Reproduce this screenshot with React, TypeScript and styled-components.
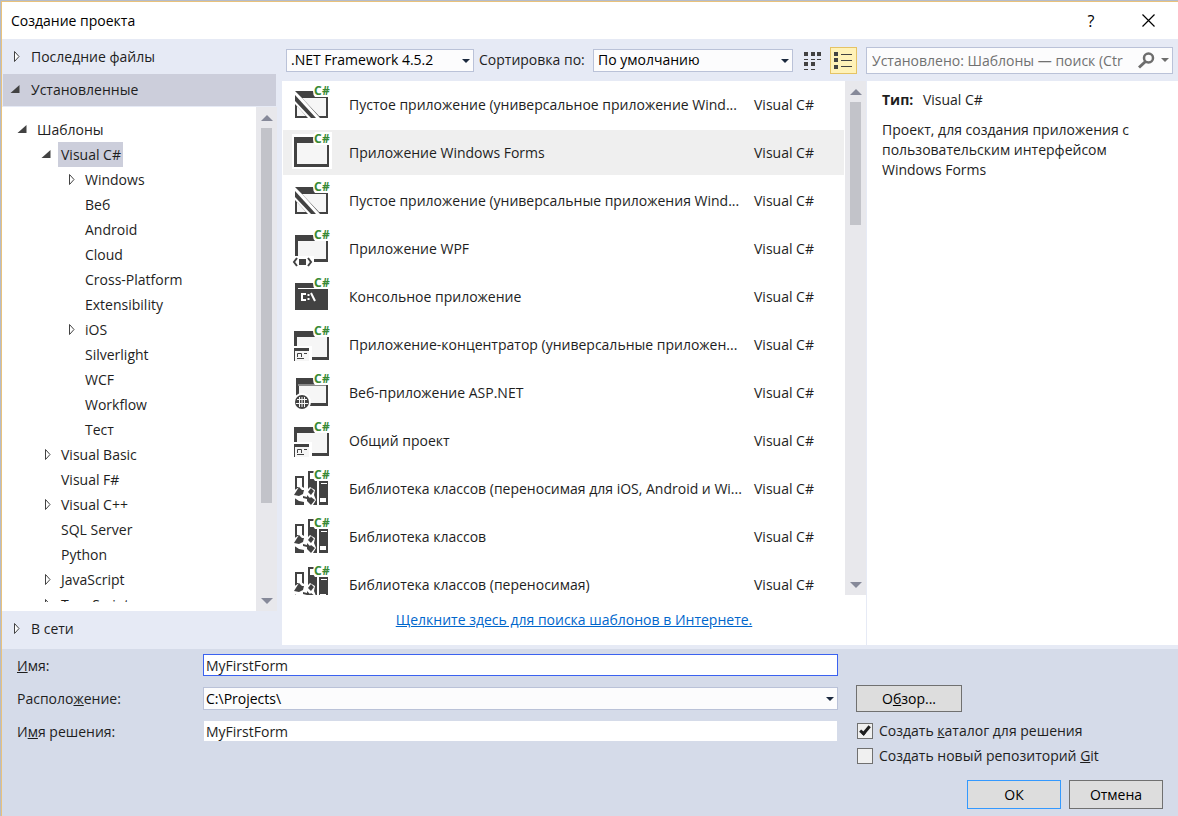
import React from "react";
import styled, { createGlobalStyle, css } from "styled-components";

const colors = {
  text: "#1e1e1e",
  panel: "#e6eaf5",
  form: "#d5dbe9",
  selected: "#cccedb",
  glyph: "#424242",
  green: "#388a34",
};

const GlobalStyle = createGlobalStyle`
  *, *::before, *::after { box-sizing: border-box; }
  body { margin: 0; }
  body, button, input, select {
    font-family: "Open Sans", "Noto Sans", sans-serif;
    font-size: 14px;
    line-height: 20px;
    color: ${colors.text};
  }
`;

const Dialog = styled.div`
  height: 100vh;
  min-height: 480px;
  display: flex;
  flex-direction: column;
  border-top: 1px solid #b4bccb;
  border-left: 1px solid #b4bccb;
  background: ${colors.panel};
`;

const Frame = styled.div`
  flex: 1;
  min-height: 0;
  display: flex;
  flex-direction: column;
  border-top: 1px solid #e9c27c;
  border-left: 1px solid #e9c27c;
`;

const TitleBar = styled.header`
  flex: none;
  height: 37px;
  display: flex;
  align-items: center;
  padding: 0 20px 0 9px;
  background: #fff;
`;

const Title = styled.h1`
  flex: 1;
  margin: 0;
  font-size: 14px;
  font-weight: 400;
  color: #000;
`;

const CaptionButton = styled.button`
  width: 20px;
  height: 24px;
  margin-left: 37px;
  padding: 0;
  border: 0;
  background: none;
  display: flex;
  align-items: center;
  justify-content: center;
  font-size: 16px;
  color: #000;
`;

const Main = styled.main`
  flex: 1;
  min-height: 0;
  display: flex;
`;

const Sidebar = styled.nav`
  flex: 0 0 275px;
  min-height: 0;
  display: flex;
  flex-direction: column;
`;

const Section = styled.button<{ $selected?: boolean; $height: number }>`
  flex: none;
  height: ${(p) => p.$height}px;
  margin: ${(p) => (p.$selected ? "0 1px 1px" : "0")};
  padding: 0 0 0 ${(p) => (p.$selected ? 7 : 8)}px;
  border: 0;
  display: flex;
  align-items: center;
  gap: 11px;
  text-align: left;
  background: ${(p) => (p.$selected ? colors.selected : "transparent")};
`;

const OnlineSection = styled.div`
  flex: none;
  height: 38px;
  display: flex;
  flex-direction: column;
`;

const TreePanel = styled.div`
  flex: 1;
  min-height: 0;
  display: flex;
  background: #fff;
`;

const TreeView = styled.ul`
  flex: 1;
  min-width: 0;
  margin: 10px 0 9px;
  padding: 0;
  list-style: none;
  overflow: hidden;
`;

const TreeRow = styled.li<{ $level: number }>`
  height: 25px;
  display: flex;
  align-items: center;
  padding-left: ${(p) => 15 + p.$level * 24}px;
`;

const TreeLabel = styled.button<{ $selected?: boolean }>`
  height: 25px;
  margin-left: 7px;
  padding: 0 2px 0 3px;
  border: 0;
  white-space: nowrap;
  background: ${(p) => (p.$selected ? colors.selected : "transparent")};
`;

const ScrollBar = styled.div<{ $top: number }>`
  flex: 0 0 21px;
  display: flex;
  flex-direction: column;
  align-items: center;
  padding: ${(p) => p.$top}px 0 7px;
  background: #e8e8ec;
`;

const ScrollTrack = styled.div`
  flex: 1;
  width: 11px;
  margin: 7px 0;
`;

const ScrollThumb = styled.div<{ $percent: number }>`
  height: ${(p) => p.$percent}%;
  background: #c2c3c9;
`;

const Content = styled.div`
  flex: 1;
  min-width: 0;
  min-height: 0;
  display: flex;
  flex-direction: column;
  padding: 0 0 4px 5px;
`;

const Toolbar = styled.div`
  flex: none;
  height: 42px;
  display: flex;
  align-items: center;
  padding: 0 5px 0 4px;
`;

const ComboBox = styled.div<{ $width?: number }>`
  position: relative;
  flex: none;
  width: ${(p) => (p.$width ? p.$width + "px" : "100%")};
  height: 23px;

  svg {
    position: absolute;
    top: 10px;
    right: 4px;
    pointer-events: none;
  }
`;

const ComboSelect = styled.select<{ $indent: number }>`
  appearance: none;
  width: 100%;
  height: 100%;
  padding: 0 16px 0 ${(p) => p.$indent}px;
  border: 1px solid #bac2d8;
  border-radius: 0;
  background: #fcfcfd;
  color: #000;
`;

const SortLabel = styled.label`
  flex: none;
  width: 119px;
  padding-left: 5px;
  white-space: nowrap;
`;

const ViewButton = styled.button<{ $active?: boolean }>`
  flex: none;
  width: 27px;
  height: 27px;
  margin-left: ${(p) => (p.$active ? 4 : 6)}px;
  padding: 0;
  display: flex;
  align-items: center;
  justify-content: center;
  border: 1px solid ${(p) => (p.$active ? "#e5c365" : "transparent")};
  background: ${(p) => (p.$active ? "#fff2b8" : "transparent")};
`;

const SearchBox = styled.div`
  flex: 1;
  min-width: 0;
  height: 27px;
  margin-left: 9px;
  display: flex;
  align-items: center;
  border: 1px solid #bac2d8;
  background: #fcfcfd;
`;

const SearchInput = styled.input`
  flex: 1;
  min-width: 0;
  height: 23px;
  padding: 0 0 0 5px;
  border: 0;
  outline: 0;
  background: none;

  &::placeholder { color: #717171; opacity: 1; }
`;

const SearchButton = styled.button`
  flex: none;
  padding: 0 3px 0 0;
  border: 0;
  display: flex;
  align-items: center;
  gap: 6px;
  background: none;
`;

const Panes = styled.div`
  flex: 1;
  min-height: 0;
  display: flex;
`;

const TemplatePane = styled.section`
  flex: 1;
  min-width: 0;
  display: flex;
  flex-direction: column;
  border-right: 1px solid ${colors.panel};
  background: #fff;
`;

const TemplateArea = styled.div`
  flex: 1;
  min-height: 0;
  display: flex;
`;

const TemplateList = styled.ul`
  flex: 1;
  min-width: 0;
  margin: 0;
  padding: 0 1px;
  list-style: none;
  overflow: hidden;
`;

const TemplateCell = styled.li`
  height: 48px;
  padding: 1px 0 2px;
`;

const TemplateRow = styled.button<{ $selected?: boolean }>`
  width: 100%;
  height: 45px;
  padding: 0 0 0 9px;
  border: 0;
  display: flex;
  align-items: center;
  text-align: left;
  background: ${(p) => (p.$selected ? "#efefef" : "transparent")};

  svg {
    flex: none;
    align-self: flex-start;
    margin: 1px 17px 0 0;
  }
`;

const TemplateName = styled.span`
  flex: 1;
  min-width: 0;
  white-space: nowrap;
`;

const TemplateLanguage = styled.span`
  flex: 0 0 90px;
`;

const OnlineLinkBar = styled.div`
  flex: none;
  height: 50px;
  display: flex;
  justify-content: center;
  align-items: center;
`;

const OnlineLink = styled.a`
  color: #0066cc;
  text-decoration: underline;
`;

const InfoPane = styled.aside`
  flex: 0 0 311px;
  padding: 9px 15px;
  background: #fff;

  p { margin: 0 0 10px; }
  strong { margin-right: 6px; }
`;

const Form = styled.form`
  flex: none;
  padding: 5px 15px 7px;
  background: ${colors.form};
`;

const FormGrid = styled.div`
  display: grid;
  grid-template-columns: 186px minmax(0, 1fr) 325px;
  grid-template-rows: 23px 27px 23px;
  row-gap: 8px;
  align-items: center;
`;

const FieldLabel = styled.label`
  grid-column: 1;
`;

const TextField = styled.input<{ $focused?: boolean }>`
  grid-column: 2;
  align-self: start;
  width: 100%;
  height: 22px;
  padding: 0 2px;
  border: 1px solid ${(p) => (p.$focused ? "#3b62f0" : colors.form)};
  outline: 0;
  background: #fff;
`;

const DialogButton = styled.button<{ $primary?: boolean; $wide?: boolean }>`
  width: ${(p) => (p.$wide ? 106 : 94)}px;
  height: ${(p) => (p.$wide ? 27 : 29)}px;
  padding: 0;
  border: 1px solid ${(p) => (p.$primary ? "#3399ff" : "#707070")};
  background: #dddddd;
  color: #000;
`;

const SideCell = styled.div<{ $row: number }>`
  grid-column: 3;
  grid-row: ${(p) => p.$row};
  align-self: start;
  height: 23px;
  padding-left: 18px;
`;

const CheckList = styled.div`
  display: flex;
  flex-direction: column;
  gap: 3px;
`;

const CheckLabel = styled.label`
  height: 22px;
  display: flex;
  align-items: center;
  gap: 6px;
  padding-left: 1px;
  white-space: nowrap;
`;

const checkMark = css`
  &:checked::after {
    content: "";
    position: absolute;
    left: 4px;
    top: 0;
    width: 6px;
    height: 11px;
    border: solid ${colors.text};
    border-width: 0 3px 3px 0;
    transform: rotate(40deg);
  }
`;

const CheckBox = styled.input`
  appearance: none;
  position: relative;
  width: 16px;
  height: 16px;
  margin: 0;
  border: 1px solid #707070;
  background: #f0f0f0;
  ${checkMark}
`;

const Actions = styled.div`
  display: flex;
  justify-content: flex-end;
  gap: 8px;
  margin-top: 37px;
`;

type Kind = "blank" | "forms" | "wpf" | "console" | "hub" | "web" | "library";

const Expander = ({ state }: { state?: "open" | "closed" }) => (
  <svg width="10" height="14" viewBox="0 0 10 14" aria-hidden="true">
    {state === "open" && <path d="M9.5 2v8H0.5z" fill={colors.glyph} />}
    {state === "closed" && (
      <path d="M4.5 1.5v10L9 6.5z" fill="#fff" stroke={colors.glyph} />
    )}
  </svg>
);

const Caret = ({ color = "#1b293e" }: { color?: string }) => (
  <svg width="8" height="5" viewBox="0 0 8 5" aria-hidden="true">
    <path d="M0 0h8L4 4z" fill={color} />
  </svg>
);

const ScrollArrow = ({ down }: { down?: boolean }) => (
  <svg width="12" height="6" viewBox="0 0 12 6" aria-hidden="true">
    <path d={down ? "M0 0h12L6 6z" : "M0 6h12L6 0z"} fill="#868999" />
  </svg>
);

const WindowShape = ({ left, right, top, bottom }: { left: number; right: number; top: number; bottom: number }) => (
  <>
    <rect x={left} y={top} width={right - left} height={bottom - top} fill={colors.glyph} />
    <rect x={left + 3} y={top + 6} width={right - left - 5} height={bottom - top - 9} fill="#f6f6f6" />
  </>
);

const LanguageBadge = () => (
  <>
    <path d="M23 1h17v12H37v1H23q-2-2-2-6t2-7z" fill="#fff" />
    <text
      x="22 30"
      y="12"
      fontFamily="Noto Sans, sans-serif"
      fontSize="12"
      fontWeight="700"
      fill={colors.green}
    >
      C#
    </text>
  </>
);

const iconArt: Record<Kind, React.ReactNode> = {
  blank: (
    <>
      <path d="M3 8h33v27h-8L10 15z" fill={colors.glyph} />
      <path d="M10 15h24v18h-7z" fill="#f6f6f6" />
      <path d="M3 12l21 23h-5L3 18z" fill={colors.glyph} />
      <path d="M3 21l13 14H3z" fill={colors.glyph} />
      <path d="M5 23l9 10H5z" fill="#f6f6f6" />
    </>
  ),
  forms: (
    <>
      <rect y="3" width="40" height="35" fill="#fff" />
      <WindowShape left={2} right={37} top={6} bottom={36} />
    </>
  ),
  wpf: (
    <>
      <WindowShape left={3} right={36} top={8} bottom={35} />
      <rect x="0" y="29" width="22" height="11" fill="#fff" />
      <rect x="7" y="32" width="7" height="6" fill={colors.glyph} />
      <path d="M5 31L2 35l3 4M16 31l3 4-3 4" fill="none" stroke={colors.glyph} strokeWidth="2" />
    </>
  ),
  console: (
    <>
      <rect x="3" y="8" width="33" height="27" fill={colors.glyph} />
      <rect x="6" y="13" width="27" height="1" fill="#fff" />
      <path d="M14 19H10V25h4M16.500 19v2M16.500 23v2M19 18l4 8" fill="none" stroke="#fff" strokeWidth="2" />
    </>
  ),
  hub: (
    <>
      <WindowShape left={2} right={37} top={8} bottom={37} />
      <rect x="1" y="23" width="19" height="16" fill="#fff" />
      <rect x="2" y="25" width="15" height="13" fill="#f6f6f6" />
      <path d="M2 25h15v3H3v10H2z" fill={colors.glyph} />
      <path d="M5.500 34v-3.500h4V34M12 30.500h3M5 35.500h7" fill="none" stroke={colors.glyph} />
    </>
  ),
  web: (
    <>
      <WindowShape left={4} right={36} top={7} bottom={35} />
      <rect x="6" y="13" width="28" height="2" fill="#8a8a8a" />
      <circle cx="10" cy="31" r="9" fill="#fff" />
      <circle cx="10" cy="31" r="7" fill={colors.glyph} />
      <path d="M5 28.500h10M4 32.500h12M10 26v10M7.500 26v10M12.500 26v10" fill="none" stroke="#f6f6f6" />
    </>
  ),
  library: (
    <>
      <path d="M3 9h9v29H3z" fill={colors.glyph} />
      <path d="M5 11h5v9H5z" fill="#fff" />
      <path d="M16 4h9v34h-9z" fill={colors.glyph} />
      <path d="M18 6h7v6h-7z" fill="#fff" />
      <path d="M27 14h9v24h-9z" fill={colors.glyph} />
      <path d="M29 16h6v1h-6zM28 31h6v4h-6z" fill="#fff" />
      <path d="M9 19l6 4 3-3 5 3-1 5 2 5-3 5-5 1-4-4-5-1-6-4v-6z" fill="#fff" />
      <path d="M7 20l3 3h2l-1 4-4 2-5-1zM16 25l3-4 3 3-3 4zM15 34l4-4 4 3-4 5zM11 29l4 1v-2l3 3-3 3v-2l-4-1z" fill={colors.glyph} />
      <path d="M3 32l6 4v2H3z" fill={colors.glyph} />
    </>
  ),
};

const TemplateIcon = ({ kind }: { kind: Kind }) => (
  <svg width="40" height="40" viewBox="0 0 40 40" aria-hidden="true">
    {iconArt[kind]}
    <LanguageBadge />
  </svg>
);

const tree: { label: string; level: number; state?: "open" | "closed"; selected?: boolean }[] = [
  { label: "Шаблоны", level: 0, state: "open" },
  { label: "Visual C#", level: 1, state: "open", selected: true },
  { label: "Windows", level: 2, state: "closed" },
  { label: "Веб", level: 2 },
  { label: "Android", level: 2 },
  { label: "Cloud", level: 2 },
  { label: "Cross-Platform", level: 2 },
  { label: "Extensibility", level: 2 },
  { label: "iOS", level: 2, state: "closed" },
  { label: "Silverlight", level: 2 },
  { label: "WCF", level: 2 },
  { label: "Workflow", level: 2 },
  { label: "Тест", level: 2 },
  { label: "Visual Basic", level: 1, state: "closed" },
  { label: "Visual F#", level: 1 },
  { label: "Visual C++", level: 1, state: "closed" },
  { label: "SQL Server", level: 1 },
  { label: "Python", level: 1 },
  { label: "JavaScript", level: 1, state: "closed" },
  { label: "TypeScript", level: 1, state: "closed" },
];

const templates: { name: string; kind: Kind; selected?: boolean }[] = [
  { name: "Пустое приложение (универсальное приложение Wind...", kind: "blank" },
  { name: "Приложение Windows Forms", kind: "forms", selected: true },
  { name: "Пустое приложение (универсальные приложения Wind...", kind: "blank" },
  { name: "Приложение WPF", kind: "wpf" },
  { name: "Консольное приложение", kind: "console" },
  { name: "Приложение-концентратор (универсальные приложен...", kind: "hub" },
  { name: "Веб-приложение ASP.NET", kind: "web" },
  { name: "Общий проект", kind: "hub" },
  { name: "Библиотека классов (переносимая для iOS, Android и Wi...", kind: "library" },
  { name: "Библиотека классов", kind: "library" },
  { name: "Библиотека классов (переносимая)", kind: "library" },
];

export default function App() {
  return (
    <Dialog>
      <GlobalStyle />
      <Frame>
        <TitleBar>
          <Title>Создание проекта</Title>
          <CaptionButton aria-label="Справка">?</CaptionButton>
          <CaptionButton aria-label="Закрыть">
            <svg width="13" height="13" viewBox="0 0 13 13">
              <path d="M0.500 0.500l12 12M12.500 0.500l-12 12" stroke="#000" strokeWidth="1.200" />
            </svg>
          </CaptionButton>
        </TitleBar>
        <Main>
          <Sidebar>
            <Section $height={35}>
              <Expander state="closed" />
              <span>Последние файлы</span>
            </Section>
            <Section $height={32} $selected>
              <Expander state="open" />
              <span>Установленные</span>
            </Section>
            <TreePanel>
              <TreeView>
                {tree.map((node) => (
                  <TreeRow key={node.label} $level={node.level}>
                    <Expander state={node.state} />
                    <TreeLabel $selected={node.selected}>{node.label}</TreeLabel>
                  </TreeRow>
                ))}
              </TreeView>
              <ScrollBar $top={8}>
                <ScrollArrow />
                <ScrollTrack>
                  <ScrollThumb $percent={81} />
                </ScrollTrack>
                <ScrollArrow down />
              </ScrollBar>
            </TreePanel>
            <OnlineSection>
              <Section $height={35}>
                <Expander state="closed" />
                <span>В сети</span>
              </Section>
            </OnlineSection>
          </Sidebar>
          <Content>
            <Toolbar>
              <ComboBox $width={188}>
                <ComboSelect $indent={4} aria-label="Версия платформы">
                  <option>.NET Framework 4.5.2</option>
                </ComboSelect>
                <Caret />
              </ComboBox>
              <SortLabel htmlFor="sort">Сортировка по:</SortLabel>
              <ComboBox $width={200}>
                <ComboSelect $indent={4} id="sort">
                  <option>По умолчанию</option>
                </ComboSelect>
                <Caret />
              </ComboBox>
              <ViewButton aria-label="Мелкие значки">
                <svg width="18" height="19" viewBox="0 0 18 19" fill={colors.glyph}>
                  <path d="M0 1h4v4H0zM7 1h4v4H7zM13 1h4v4h-4zM0 8h4v1H0zM7 8h4v1H7zM13 8h4v1h-4zM0 11h4v4H0zM7 11h4v4H7zM0 18h4v1H0zM7 18h4v1H7z" />
                </svg>
              </ViewButton>
              <ViewButton $active aria-label="Средние значки">
                <svg width="19" height="19" viewBox="0 0 19 19" fill={colors.glyph}>
                  <path d="M0 1h4v4H0zM0 7h4v4H0zM0 14h4v4H0zM7 3h11v1H7zM7 9h11v1H7zM7 15h11v1H7z" />
                </svg>
              </ViewButton>
              <SearchBox>
                <SearchInput
                  aria-label="Поиск шаблонов"
                  placeholder="Установлено: Шаблоны — поиск (Ctr"
                />
                <SearchButton aria-label="Найти">
                  <svg width="17" height="17" viewBox="0 0 17 17" fill="none" stroke="#6d6d6d">
                    <circle cx="10.500" cy="6" r="4.500" strokeWidth="2.500" />
                    <path d="M7.500 9.500L1 15.500" strokeWidth="3" />
                  </svg>
                  <Caret color="#6d6d6d" />
                </SearchButton>
              </SearchBox>
            </Toolbar>
            <Panes>
              <TemplatePane>
                <TemplateArea>
                  <TemplateList>
                    {templates.map((t) => (
                      <TemplateCell key={t.name}>
                        <TemplateRow $selected={t.selected}>
                          <TemplateIcon kind={t.kind} />
                          <TemplateName>{t.name}</TemplateName>
                          <TemplateLanguage>Visual C#</TemplateLanguage>
                        </TemplateRow>
                      </TemplateCell>
                    ))}
                  </TemplateList>
                  <ScrollBar $top={8}>
                    <ScrollArrow />
                    <ScrollTrack>
                      <ScrollThumb $percent={26} />
                    </ScrollTrack>
                    <ScrollArrow down />
                  </ScrollBar>
                </TemplateArea>
                <OnlineLinkBar>
                  <OnlineLink href="#online">
                    Щелкните здесь для поиска шаблонов в Интернете.
                  </OnlineLink>
                </OnlineLinkBar>
              </TemplatePane>
              <InfoPane>
                <p>
                  <strong>Тип:</strong> Visual C#
                </p>
                <p>
                  Проект, для создания приложения с пользовательским интерфейсом Windows Forms
                </p>
              </InfoPane>
            </Panes>
          </Content>
        </Main>
        <Form onSubmit={(e) => e.preventDefault()}>
          <FormGrid>
            <FieldLabel htmlFor="name">
              <u>И</u>мя:
            </FieldLabel>
            <TextField id="name" $focused defaultValue="MyFirstForm" />
            <FieldLabel htmlFor="location">
              Располо<u>ж</u>ение:
            </FieldLabel>
            <ComboBox>
              <ComboSelect $indent={2} id="location">
                <option>C:\Projects\</option>
              </ComboSelect>
              <Caret />
            </ComboBox>
            <FieldLabel htmlFor="solution">
              И<u>м</u>я решения:
            </FieldLabel>
            <TextField id="solution" defaultValue="MyFirstForm" />
            <SideCell $row={2}>
              <DialogButton type="button" $wide>
                О<u>б</u>зор...
              </DialogButton>
            </SideCell>
            <SideCell $row={3}>
              <CheckList>
                <CheckLabel>
                  <CheckBox type="checkbox" defaultChecked />
                  <span>
                    Создать <u>к</u>аталог для решения
                  </span>
                </CheckLabel>
                <CheckLabel>
                  <CheckBox type="checkbox" />
                  <span>
                    Создать новый репозиторий <u>G</u>it
                  </span>
                </CheckLabel>
              </CheckList>
            </SideCell>
          </FormGrid>
          <Actions>
            <DialogButton type="submit" $primary>
              ОК
            </DialogButton>
            <DialogButton type="button">Отмена</DialogButton>
          </Actions>
        </Form>
      </Frame>
    </Dialog>
  );
}
